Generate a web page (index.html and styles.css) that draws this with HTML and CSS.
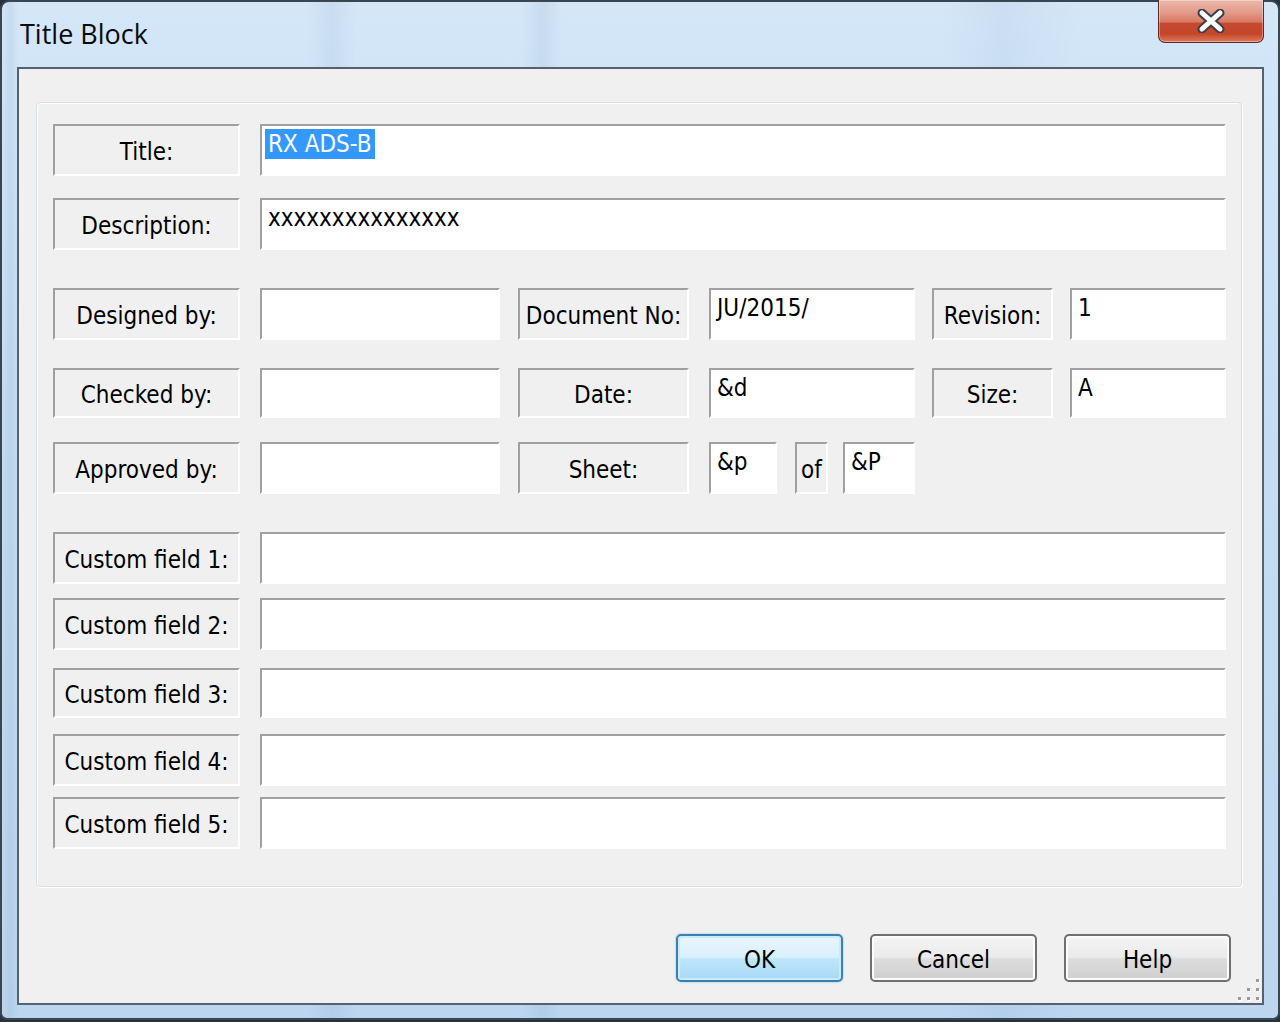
FILE: index.html
```html
<!DOCTYPE html>
<html>
<head>
    <title>Title Block</title>
    <link rel="stylesheet" href="styles.css">
</head>
<body>
    <div class="window">
        <div class="titlebar">
            <span class="caption">Title Block</span>
            <div class="close-button">
                <svg width="28" height="24" viewBox="0 0 28 24">
                    <path d="M5 4 L23 20 M23 4 L5 20" stroke="#3b3f48" stroke-width="9" stroke-linecap="round"/>
                    <path d="M5 4 L23 20 M23 4 L5 20" stroke="#ffffff" stroke-width="5" stroke-linecap="round"/>
                </svg>
            </div>
        </div>

        <div class="client">
            <div class="group">
                <div class="row">
                    <div class="label w-main">Title:</div>
                    <div class="field grow"><span class="selected">RX ADS-B</span></div>
                </div>
                <div class="row gap-22">
                    <div class="label w-main">Description:</div>
                    <div class="field grow">xxxxxxxxxxxxxxx</div>
                </div>

                <div class="row gap-38">
                    <div class="label w-main">Designed by:</div>
                    <div class="field w-name"></div>
                    <div class="label w-mid ml-18">Document No:</div>
                    <div class="field w-doc">JU/2015/</div>
                    <div class="label w-rev ml-17">Revision:</div>
                    <div class="field w-val ml-17">1</div>
                </div>
                <div class="row gap-28 short">
                    <div class="label w-main">Checked by:</div>
                    <div class="field w-name"></div>
                    <div class="label w-mid ml-18">Date:</div>
                    <div class="field w-doc">&amp;d</div>
                    <div class="label w-rev ml-17">Size:</div>
                    <div class="field w-val ml-17">A</div>
                </div>
                <div class="row gap-24">
                    <div class="label w-main">Approved by:</div>
                    <div class="field w-name"></div>
                    <div class="label w-mid ml-18">Sheet:</div>
                    <div class="field w-sheet">&amp;p</div>
                    <div class="label w-of ml-18">of</div>
                    <div class="field w-sheet2 ml-15">&amp;P</div>
                </div>

                <div class="row gap-38">
                    <div class="label w-main">Custom field 1:</div>
                    <div class="field grow"></div>
                </div>
                <div class="row gap-14">
                    <div class="label w-main">Custom field 2:</div>
                    <div class="field grow"></div>
                </div>
                <div class="row gap-18 short">
                    <div class="label w-main">Custom field 3:</div>
                    <div class="field grow"></div>
                </div>
                <div class="row gap-16">
                    <div class="label w-main">Custom field 4:</div>
                    <div class="field grow"></div>
                </div>
                <div class="row gap-11">
                    <div class="label w-main">Custom field 5:</div>
                    <div class="field grow"></div>
                </div>
            </div>

            <div class="button-bar">
                <button type="button" class="btn btn-default">OK</button>
                <button type="button" class="btn">Cancel</button>
                <button type="button" class="btn">Help</button>
            </div>

            <svg class="grip" width="24" height="24" viewBox="0 0 24 24">
                <g fill="#ffffff">
                    <rect x="21" y="3" width="3" height="3"/>
                    <rect x="12" y="12" width="3" height="3"/>
                    <rect x="21" y="12" width="3" height="3"/>
                    <rect x="3" y="21" width="3" height="3"/>
                    <rect x="12" y="21" width="3" height="3"/>
                    <rect x="21" y="21" width="3" height="3"/>
                </g>
                <g fill="#9a9a9a">
                    <rect x="20" y="2" width="3" height="3"/>
                    <rect x="11" y="11" width="3" height="3"/>
                    <rect x="20" y="11" width="3" height="3"/>
                    <rect x="2" y="20" width="3" height="3"/>
                    <rect x="11" y="20" width="3" height="3"/>
                    <rect x="20" y="20" width="3" height="3"/>
                </g>
            </svg>
        </div>
    </div>
</body>
</html>
```

FILE: styles.css
```css
body {
    margin: 0;
    width: 1280px;
    height: 1022px;
    background-color: #26323e;
    overflow: hidden;
}

.window {
    display: flex;
    flex-direction: column;
    box-sizing: border-box;
    width: 1280px;
    height: 1020px;
    border: 2px solid #3a4552;
    border-radius: 9px 9px 7px 7px;
    background:
        linear-gradient(90deg,
            rgba(255,255,255,0) 0px,
            rgba(80,110,140,0.1) 8px,
            rgba(255,255,255,0) 16px,
            rgba(255,255,255,0) 305px,
            rgba(90,120,150,0.09) 330px,
            rgba(255,255,255,0) 355px,
            rgba(255,255,255,0) 520px,
            rgba(90,120,150,0.1) 540px,
            rgba(255,255,255,0) 560px,
            rgba(255,255,255,0) 940px,
            rgba(90,120,150,0.07) 1000px,
            rgba(255,255,255,0) 1080px),
        linear-gradient(180deg, #d4e7f9 0%, #c6ddf3 40%, #bcd6f0 100%);
}

.titlebar {
    display: flex;
    justify-content: space-between;
    align-items: flex-start;
    height: 65px;
    flex-shrink: 0;
}

.caption {
    margin: 13px 0 0 18px;
    font-family: "Open Sans", "Noto Sans", sans-serif;
    font-size: 27px;
    color: #0a0a0a;
}

.close-button {
    display: flex;
    justify-content: center;
    align-items: center;
    width: 104px;
    height: 42px;
    margin: -2px 14px 0 0;
    border: 1px solid #5b2a22;
    border-top: none;
    border-radius: 0 0 7px 7px;
    background: linear-gradient(180deg, #ebb9ac 0%, #e29a88 30%, #d87a64 52%, #c54a30 56%, #c4452a 80%, #dd7a5c 100%);
    box-shadow: inset 0 0 0 1px rgba(255,255,255,0.35);
}

.client {
    position: relative;
    display: flex;
    flex-direction: column;
    flex: 1;
    margin: 0 14px 13px 15px;
    padding: 33px 20px 0 17px;
    border: 2px solid #56616d;
    background-color: #f0f0f0;
    font-family: "DejaVu Sans Condensed", "DejaVu Sans", sans-serif;
    font-size: 24px;
    color: #000;
}

.group {
    display: flex;
    flex-direction: column;
    padding: 21px 15px 37px 16px;
    border: 1px solid #d5dfe5;
    border-radius: 4px;
    box-shadow: inset 1px 1px 0 #fff, 1px 1px 0 #fff;
}

.row {
    display: flex;
    height: 52px;
}

.row.short {
    height: 50px;
}

.gap-11 { margin-top: 11px; }
.gap-14 { margin-top: 14px; }
.gap-16 { margin-top: 16px; }
.gap-18 { margin-top: 18px; }
.gap-22 { margin-top: 22px; }
.gap-24 { margin-top: 24px; }
.gap-28 { margin-top: 28px; }
.gap-38 { margin-top: 38px; }

.label {
    display: flex;
    justify-content: center;
    align-items: center;
    box-sizing: border-box;
    padding-top: 4px;
    border: 2px solid;
    border-color: #a0a0a0 #ffffff #ffffff #a0a0a0;
    background-color: #f0f0f0;
    white-space: nowrap;
}

.field {
    box-sizing: border-box;
    margin-left: 20px;
    padding: 3px 6px 0 6px;
    border: 2px solid;
    border-color: #a0a0a0 #ffffff #ffffff #a0a0a0;
    background-color: #fff;
    line-height: 30px;
    white-space: nowrap;
}

.selected {
    display: inline-block;
    margin-left: -3px;
    padding: 0 3px;
    background-color: #3399ff;
    color: #fff;
}

.grow { flex: 1; }
.w-main { width: 187px; }
.w-name { width: 240px; }
.w-mid { width: 171px; }
.w-doc { width: 206px; }
.w-rev { width: 121px; }
.w-val { width: 156px; }
.w-sheet { width: 68px; }
.w-of { width: 33px; }
.w-sheet2 { width: 72px; }

.ml-15 { margin-left: 15px; }
.ml-17 { margin-left: 17px; }
.ml-18 { margin-left: 18px; }

.button-bar {
    display: flex;
    justify-content: flex-end;
    gap: 27px;
    margin: 47px 11px 0 0;
}

.btn {
    width: 167px;
    height: 48px;
    padding: 4px 0 0 0;
    border: 2px solid #707070;
    border-radius: 5px;
    background: linear-gradient(180deg, #f4f4f4 0%, #ebebeb 48%, #dddddd 52%, #cfcfcf 100%);
    box-shadow: inset 0 0 0 2px #fcfcfc;
    font-family: "DejaVu Sans Condensed", "DejaVu Sans", sans-serif;
    font-size: 24px;
    color: #000;
}

.btn-default {
    border-color: #3c7fb1;
    background: linear-gradient(180deg, #eaf6fd 0%, #d9f0fc 48%, #bee6fd 52%, #a7d9f5 100%);
    box-shadow: inset 0 0 0 2px #c8ecfc, 0 0 2px #66bbee;
}

.grip {
    position: absolute;
    right: 2px;
    bottom: 2px;
}
```
